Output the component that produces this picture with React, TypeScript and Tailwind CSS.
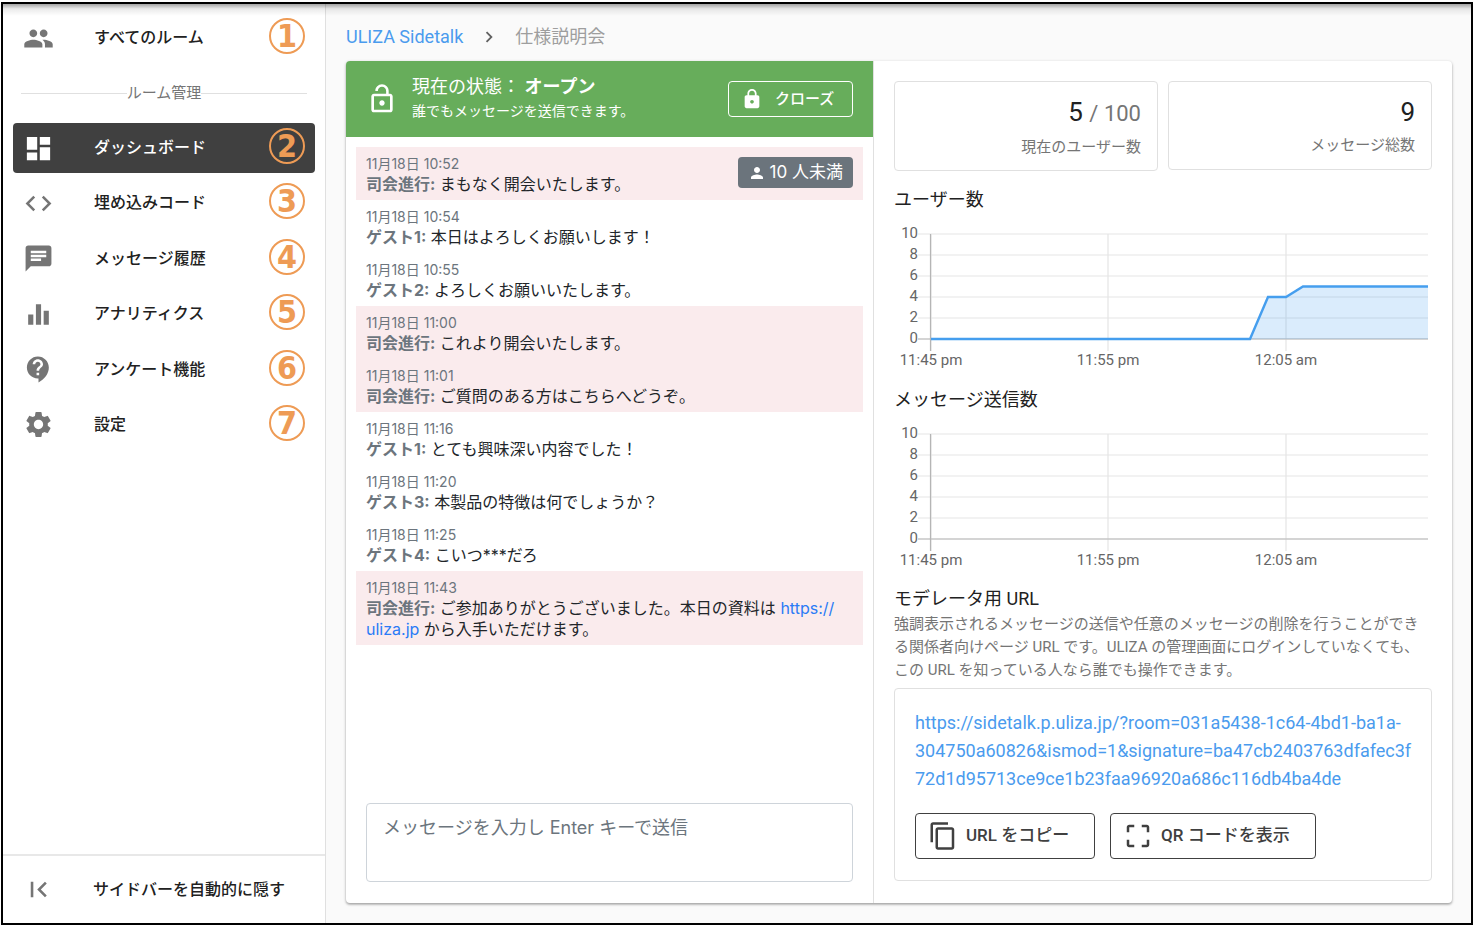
import type { IconType } from "react-icons";
import {
  MdChat,
  MdChevronRight,
  MdCode,
  MdContactSupport,
  MdContentCopy,
  MdCropFree,
  MdDashboard,
  MdEqualizer,
  MdFirstPage,
  MdLock,
  MdLockOpen,
  MdPeople,
  MdPerson,
  MdSettings,
} from "react-icons/md";

type NavEntry = { label: string; icon: IconType; step: number; active?: boolean };

const roomNav: NavEntry[] = [
  { label: "ダッシュボード", icon: MdDashboard, step: 2, active: true },
  { label: "埋め込みコード", icon: MdCode, step: 3 },
  { label: "メッセージ履歴", icon: MdChat, step: 4 },
  { label: "アナリティクス", icon: MdEqualizer, step: 5 },
  { label: "アンケート機能", icon: MdContactSupport, step: 6 },
  { label: "設定", icon: MdSettings, step: 7 },
];

type Message = { time: string; name: string; text: string; moderator?: boolean };

const messages: Message[] = [
  { time: "10:52", name: "司会進行", text: "まもなく開会いたします。", moderator: true },
  { time: "10:54", name: "ゲスト1", text: "本日はよろしくお願いします！" },
  { time: "10:55", name: "ゲスト2", text: "よろしくお願いいたします。" },
  { time: "11:00", name: "司会進行", text: "これより開会いたします。", moderator: true },
  { time: "11:01", name: "司会進行", text: "ご質問のある方はこちらへどうぞ。", moderator: true },
  { time: "11:16", name: "ゲスト1", text: "とても興味深い内容でした！" },
  { time: "11:20", name: "ゲスト3", text: "本製品の特徴は何でしょうか？" },
  { time: "11:25", name: "ゲスト4", text: "こいつ***だろ" },
];

function NavItem({ label, icon: Icon, step, active }: NavEntry) {
  return (
    <a
      href="#"
      aria-current={active ? "page" : undefined}
      className={`flex h-[50px] items-center rounded pr-2.5 pl-2.5 text-base font-medium ${
        active ? "bg-[#404040] text-white" : "text-[#212121]"
      }`}
    >
      <Icon className={`size-[31px] shrink-0 ${active ? "text-white" : "text-[#757575]"}`} />
      <span className="ml-10">{label}</span>
      <span className="mb-1 ml-auto flex size-9 items-center justify-center rounded-full border-2 border-[#ee9b55] font-['DejaVu_Sans_Condensed','DejaVu_Sans',sans-serif] text-[32px] leading-8 font-bold text-[#ee9b55]">
        {step}
      </span>
    </a>
  );
}

function Sidebar() {
  return (
    <aside className="flex w-[323px] shrink-0 flex-col border-r border-[#e0e0e0] bg-white">
      <nav className="px-2.5 pt-[9px]">
        <NavItem label="すべてのルーム" icon={MdPeople} step={1} />
        <div className="flex h-[60px] items-center px-2 text-[15px] text-[#757575]">
          <span className="h-px flex-1 bg-[#e0e0e0]" />
          <span>ルーム管理</span>
          <span className="h-px flex-1 bg-[#e0e0e0]" />
        </div>
        <div className="flex h-[327px] flex-col justify-between">
          {roomNav.map((entry) => (
            <NavItem key={entry.label} {...entry} />
          ))}
        </div>
      </nav>
      <button
        type="button"
        className="mt-auto flex h-[69px] items-center border-t-2 border-[#e8e8e8] pl-5 text-base font-medium text-[#212121]"
      >
        <MdFirstPage className="size-[31px] text-[#757575]" />
        <span className="ml-[39px]">サイドバーを自動的に隠す</span>
      </button>
    </aside>
  );
}

function MessageRow({ time, name, moderator, children }: Omit<Message, "text"> & { children: React.ReactNode }) {
  return (
    <li className={`px-2.5 pt-1.5 pb-[5px] ${moderator ? "bg-[#faebed]" : ""}`}>
      <div className="text-sm leading-[21px] text-[#6c757d]">11月18日 {time}</div>
      <div className="text-base leading-[21px] text-[#212529]">
        <b className="font-bold text-[#6c757d]">{name}:</b> {children}
      </div>
    </li>
  );
}

function Chat() {
  return (
    <section className="flex flex-col border-r border-[#e0e0e0]">
      <header className="flex h-[76px] items-center rounded-tl bg-[#67ad5b] pr-5 pl-5 text-white">
        <MdLockOpen className="size-8 shrink-0" />
        <div className="ml-[14px]">
          <p className="text-lg leading-6">
            現在の状態： <b className="font-bold">オープン</b>
          </p>
          <p className="text-sm leading-6">誰でもメッセージを送信できます。</p>
        </div>
        <button
          type="button"
          className="ml-auto flex h-9 w-[125px] items-center rounded border border-white pl-3 text-[15px] font-medium"
        >
          <MdLock className="size-[22px]" />
          <span className="ml-3">クローズ</span>
        </button>
      </header>
      <div className="relative flex flex-1 flex-col px-2.5 pt-2.5 font-[Inter,'Noto_Sans_CJK_JP',sans-serif]">
        <ul>
          {messages.map(({ text, ...rest }) => (
            <MessageRow key={rest.time} {...rest}>
              {text}
            </MessageRow>
          ))}
          <MessageRow time="11:43" name="司会進行" moderator>
            ご参加ありがとうございました。本日の資料は{" "}
            <a href="https://uliza.jp" className="text-[#2a7bf6]">
              https://
              <br />
              uliza.jp
            </a>{" "}
            から入手いただけます。
          </MessageRow>
        </ul>
        <div className="absolute top-5 right-5 flex h-[31px] items-center gap-1 rounded bg-[#6b747c] px-2.5 text-[17px] text-white">
          <MdPerson className="size-[18px]" />
          10 人未満
        </div>
        <textarea
          aria-label="メッセージ"
          placeholder="メッセージを入力し Enter キーで送信"
          className="mx-2.5 mt-auto mb-[21px] block h-[79px] resize-none rounded border border-[#ced4da] px-4 py-2.5 text-lg leading-7 placeholder:text-[#6c757d]"
        />
      </div>
    </section>
  );
}

const plotLeft = 37;
const plotRight = 534;
const plotTop = 13;
const plotBottom = 118;
const yTicks = [10, 8, 6, 4, 2, 0];
const xTicks = [
  { x: 37, label: "11:45 pm" },
  { x: 214, label: "11:55 pm" },
  { x: 392, label: "12:05 am" },
];

const toY = (value: number) => plotBottom - (value / 10) * (plotBottom - plotTop);

function Chart({ title, series }: { title: string; series?: [number, number][] }) {
  const points = series?.map(([x, value]) => `${x},${toY(value)}`).join(" ");
  return (
    <section className="h-[200px]">
      <h2 className="text-lg leading-[30px]">{title}</h2>
      <svg viewBox="0 0 538 160" className="mt-1.5 block w-full" role="img" aria-label={title}>
        <g stroke="#e5e5e5" strokeWidth="1.2">
          {yTicks.map((tick) => (
            <line key={tick} x1="24" x2={plotRight} y1={toY(tick)} y2={toY(tick)} />
          ))}
          {xTicks.map(({ x }) => (
            <line key={x} x1={x} x2={x} y1={plotTop} y2={plotBottom + 12} />
          ))}
        </g>
        <path
          d={`M${plotLeft - 0.5} ${plotTop}V${plotBottom + 12}M24 ${plotBottom}H${plotRight}`}
          stroke="#b5b5b5"
          strokeWidth="1.2"
          fill="none"
        />
        {points && (
          <>
            <polygon
              points={`${points} ${plotRight},${plotBottom} ${plotLeft},${plotBottom}`}
              fill="#459eee"
              fillOpacity="0.2"
            />
            <polyline points={points} fill="none" stroke="#459eee" strokeWidth="2.4" />
          </>
        )}
        <g fill="#666666" fontSize="15">
          {yTicks.map((tick) => (
            <text key={tick} x="24" y={toY(tick) + 4} textAnchor="end">
              {tick}
            </text>
          ))}
          {xTicks.map(({ x, label }) => (
            <text key={label} x={x} y="144" textAnchor="middle">
              {label}
            </text>
          ))}
        </g>
      </svg>
    </section>
  );
}

const userSeries: [number, number][] = [
  [37, 0],
  [356, 0],
  [374, 4],
  [392, 4],
  [409, 5],
  [534, 5],
];

function Overview() {
  return (
    <section className="px-5 pt-5 pb-[22px] text-[#212121]">
      <div className="flex items-start gap-2.5">
        <div className="h-[90px] flex-1 rounded border border-[#e0e0e0] px-4 pt-3 text-right">
          <p className="text-[26px] leading-9">
            5 <span className="text-[22px] text-[#757575]">/ 100</span>
          </p>
          <p className="text-[15px] leading-[30px] text-[#757575]">現在のユーザー数</p>
        </div>
        <div className="h-[89px] flex-1 rounded border border-[#e0e0e0] px-4 pt-3 text-right">
          <p className="text-[26px] leading-9">9</p>
          <p className="text-[15px] leading-[30px] text-[#757575]">メッセージ総数</p>
        </div>
      </div>
      <div className="mt-3.5">
        <Chart title="ユーザー数" series={userSeries} />
        <Chart title="メッセージ送信数" />
      </div>
      <h2 className="text-lg leading-[28px]">モデレータ用 URL</h2>
      <p className="text-[15px] leading-[23px] text-[#757575]">
        強調表示されるメッセージの送信や任意のメッセージの削除を行うことができ
        <br />
        る関係者向けページ URL です。ULIZA の管理画面にログインしていなくても、
        <br />
        この URL を知っている人なら誰でも操作できます。
      </p>
      <div className="mt-1.5 rounded border border-[#e0e0e0] pt-5 pr-2 pb-[21px] pl-5">
        <a
          href="https://sidetalk.p.uliza.jp/?room=031a5438-1c64-4bd1-ba1a-304750a60826&ismod=1&signature=ba47cb2403763dfafec3f72d1d95713ce9ce1b23faa96920a686c116db4ba4de"
          className="block text-lg leading-7 text-[#4a9bee]"
        >
          https://sidetalk.p.uliza.jp/?room=031a5438-1c64-4bd1-ba1a-
          <br />
          304750a60826&amp;ismod=1&amp;signature=ba47cb2403763dfafec3f
          <br />
          72d1d95713ce9ce1b23faa96920a686c116db4ba4de
        </a>
        <div className="mt-5 flex gap-[15px] text-[17px] font-medium text-[#404040]">
          <button type="button" className="flex h-[46px] w-[180px] items-center rounded border border-[#404040] pl-3">
            <MdContentCopy className="size-[30px]" />
            <span className="ml-2">URL をコピー</span>
          </button>
          <button type="button" className="flex h-[46px] w-[206px] items-center rounded border border-[#404040] pl-3">
            <MdCropFree className="size-[30px]" />
            <span className="ml-2">QR コードを表示</span>
          </button>
        </div>
      </div>
    </section>
  );
}

export default function App() {
  return (
    <div
      lang="ja"
      className="flex min-h-screen bg-white py-0.5 pr-[3px] pl-px font-[Roboto,'Noto_Sans_CJK_JP',sans-serif]"
    >
      <div className="relative flex flex-1 border-2 border-black bg-[#fafafa]">
        <Sidebar />
        <main className="flex min-w-0 flex-1 flex-col pr-[19px] pb-5 pl-5">
          <nav aria-label="パンくずリスト" className="flex h-[57px] items-center pt-2 text-lg">
            <a href="#" className="text-[#4a9bee]">
              ULIZA Sidetalk
            </a>
            <MdChevronRight className="mx-[15px] size-[22px] text-[#616161]" />
            <span className="text-[#9e9e9e]">仕様説明会</span>
          </nav>
          <div className="grid flex-1 grid-cols-[528fr_578fr] rounded bg-white shadow-[0_1px_3px_rgba(0,0,0,0.3),0_2px_2px_rgba(0,0,0,0.12)]">
            <Chat />
            <Overview />
          </div>
        </main>
        <div className="pointer-events-none absolute inset-x-0 top-0 h-3 bg-linear-to-b from-black/35 via-black/8 via-40% to-transparent" />
      </div>
    </div>
  );
}
